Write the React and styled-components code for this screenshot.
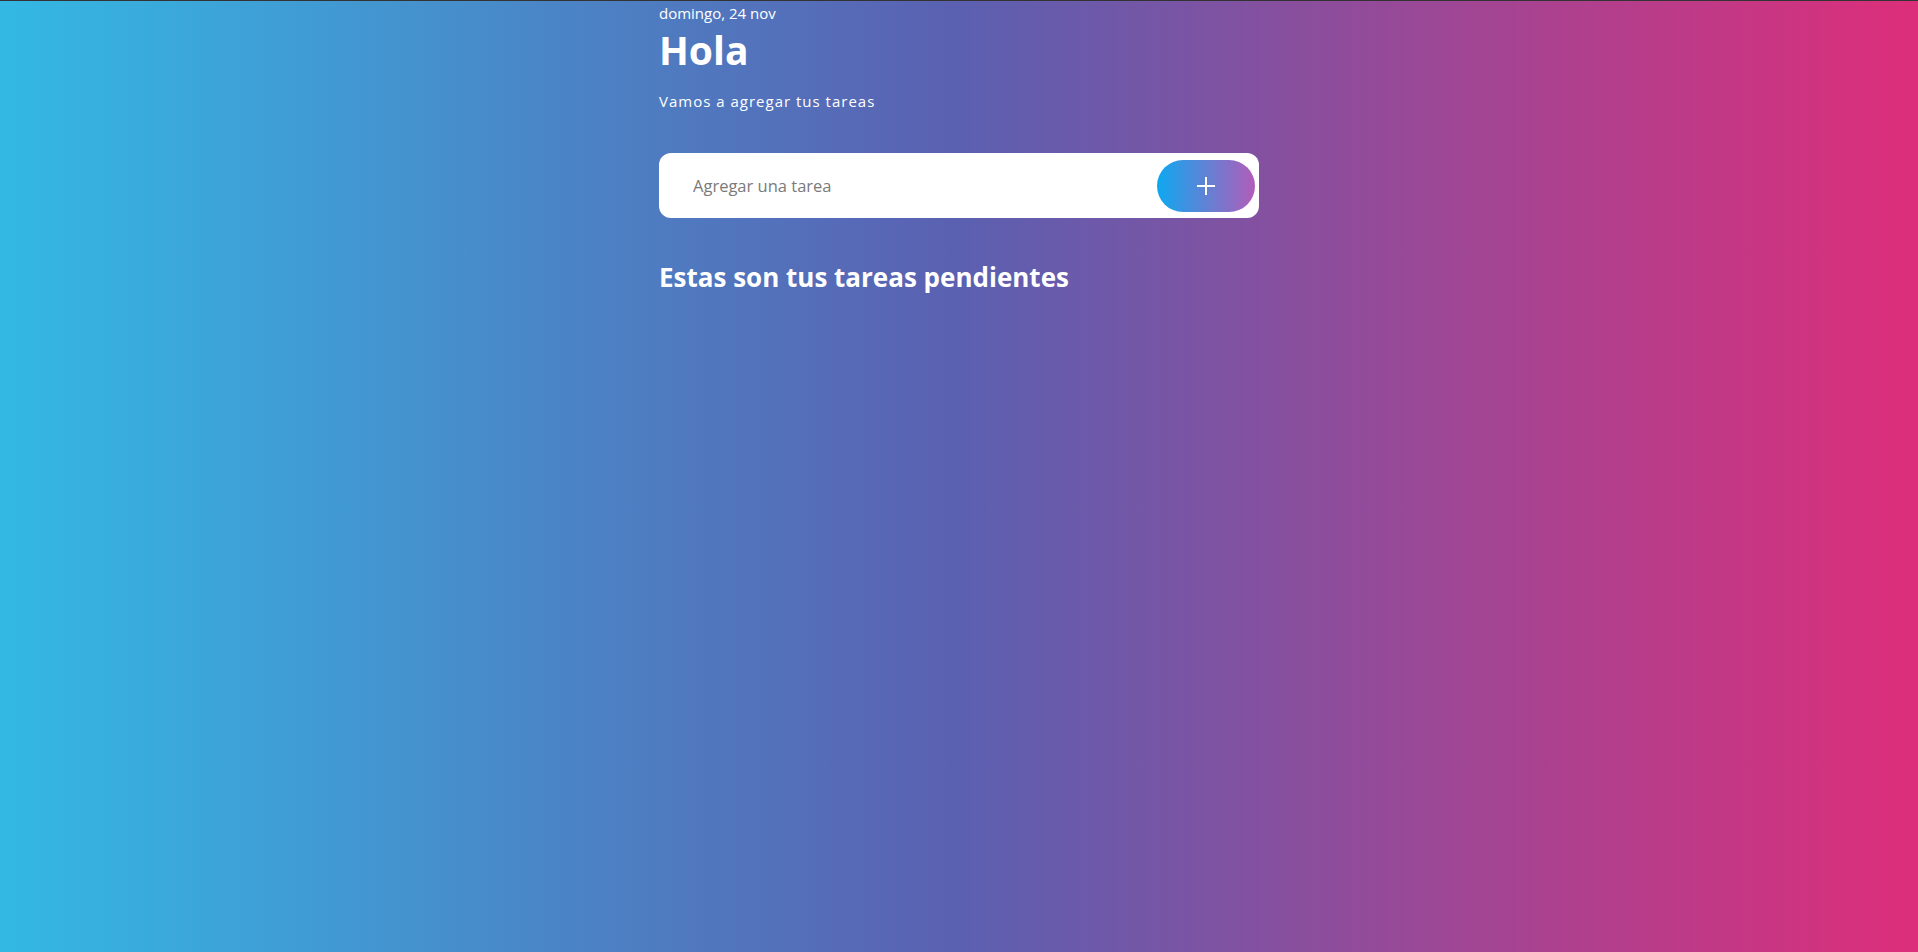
import React, { useState } from 'react'
import styled, { createGlobalStyle } from 'styled-components'

const GlobalStyle = createGlobalStyle`
  * {
    box-sizing: border-box;
  }
  html, body {
    margin: 0;
    padding: 0;
    height: 100%;
  }
  body {
    font-family: 'Open Sans', 'Noto Sans', sans-serif;
    border-top: 1px solid #333333;
  }
  #root {
    min-height: 100%;
  }
`

const Page = styled.div`
  min-height: 951px;
  background: linear-gradient(to right, #33b8e4 0%, #5b60b1 50%, #dd2e7a 100%);
  color: #ffffff;
`

const Container = styled.main`
  width: 600px;
  margin: 0 auto;
  padding-top: 2px;
`

const DateLabel = styled.div`
  font-size: 15px;
  line-height: 20px;
`

const Title = styled.h1`
  margin: 0;
  font-size: 39px;
  font-weight: 700;
  line-height: 54px;
`

const Subtitle = styled.p`
  margin: 14px 0 0;
  font-size: 15px;
  letter-spacing: 1px;
  line-height: 20px;
`

const Form = styled.form`
  margin-top: 42px;
  height: 65px;
  background: #ffffff;
  border-radius: 12px;
  display: flex;
  align-items: center;
  padding: 0 4px 0 32px;
`

const Input = styled.input`
  flex: 1;
  border: none;
  outline: none;
  background: transparent;
  font-family: 'Open Sans', 'Noto Sans', sans-serif;
  font-size: 16.5px;
  color: #333333;
  &::placeholder {
    color: #7a7a7a;
  }
`

const AddButton = styled.button`
  width: 98px;
  height: 52px;
  border: none;
  border-radius: 26px;
  background: linear-gradient(to right, #0ea8f0, #b25cb9);
  display: flex;
  align-items: center;
  justify-content: center;
  cursor: pointer;
  padding: 0;
`

const Heading = styled.h2`
  margin: 42px 0 0;
  font-size: 26px;
  font-weight: 700;
  line-height: 34px;
`

const PlusIcon = () => (
  <svg width="20" height="20" viewBox="0 0 20 20" fill="none">
    <path d="M10 1v18M1 10h18" stroke="#ffffff" strokeWidth="2" />
  </svg>
)

const App = () => {
  const [task, setTask] = useState('')

  return (
    <>
      <GlobalStyle />
      <Page>
        <Container>
          <DateLabel>domingo, 24 nov</DateLabel>
          <Title>Hola</Title>
          <Subtitle>Vamos a agregar tus tareas</Subtitle>
          <Form onSubmit={(e) => e.preventDefault()}>
            <Input
              placeholder="Agregar una tarea"
              value={task}
              onChange={(e) => setTask(e.target.value)}
            />
            <AddButton type="submit" aria-label="Agregar">
              <PlusIcon />
            </AddButton>
          </Form>
          <Heading>Estas son tus tareas pendientes</Heading>
        </Container>
      </Page>
    </>
  )
}

export default App
